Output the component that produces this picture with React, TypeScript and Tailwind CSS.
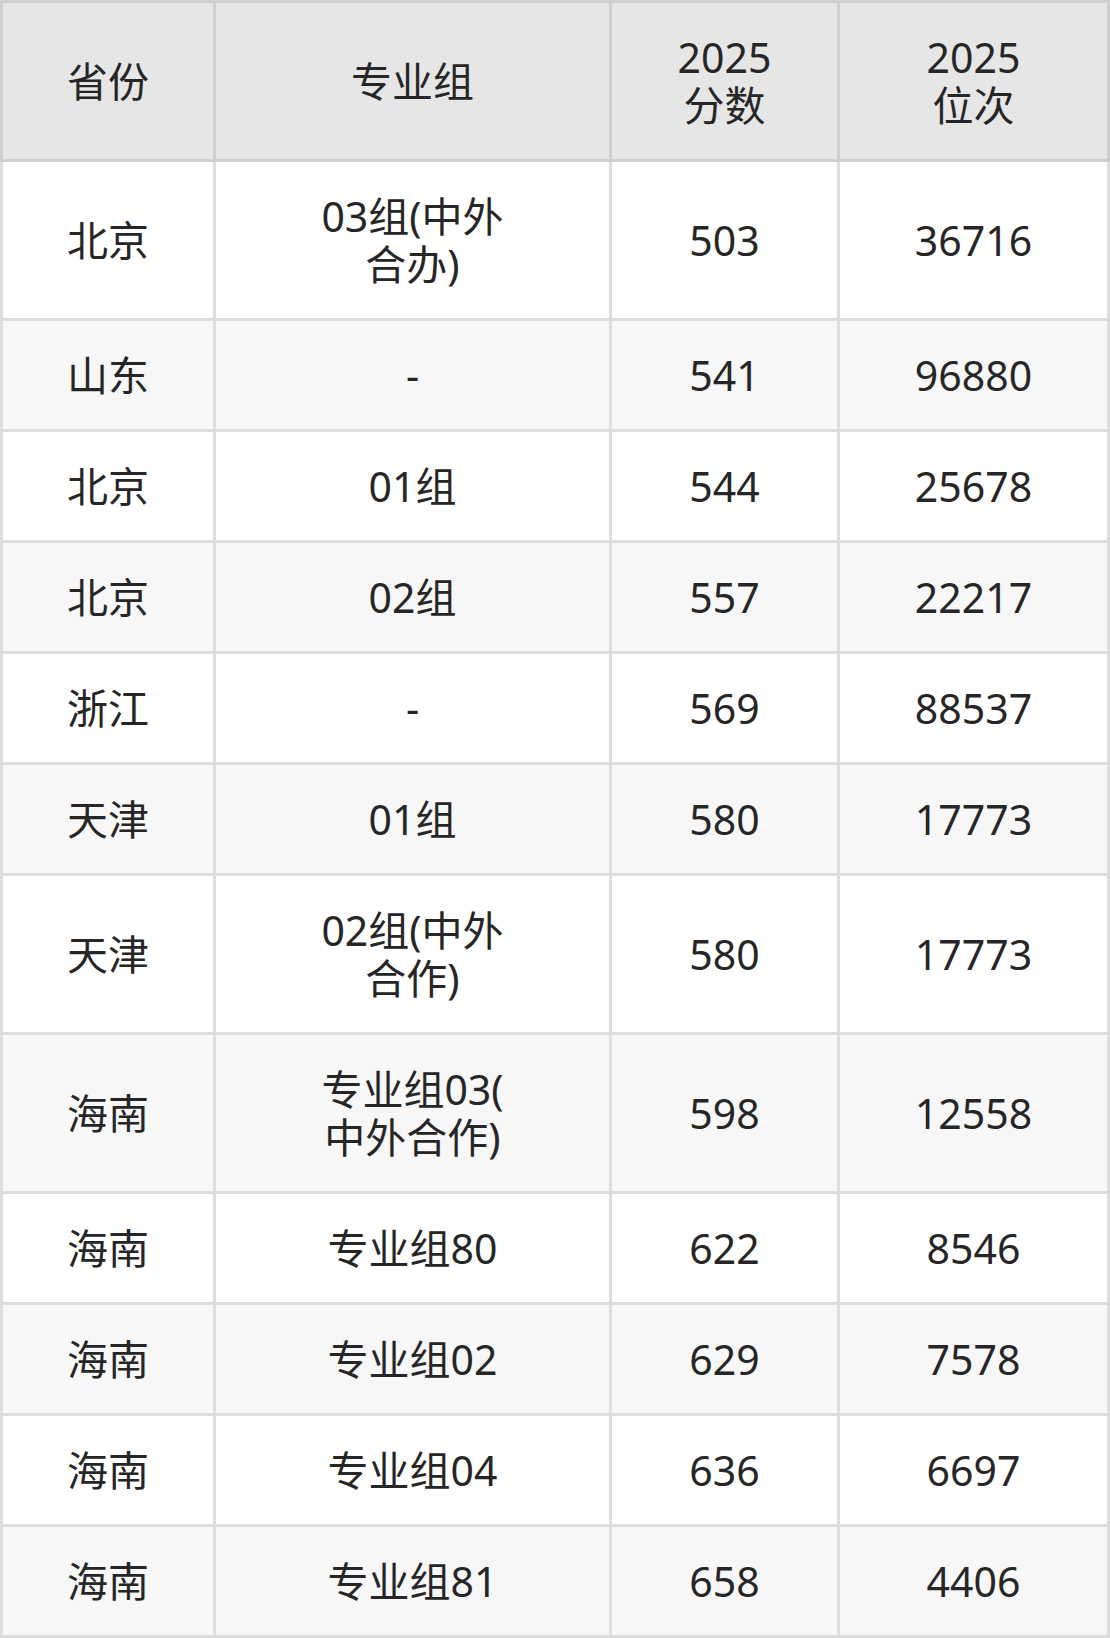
const rows: { province: string; group: string[]; score: string; rank: string }[] = [
  { province: '北京', group: ['03组(中外', '合办)'], score: '503', rank: '36716' },
  { province: '山东', group: ['-'], score: '541', rank: '96880' },
  { province: '北京', group: ['01组'], score: '544', rank: '25678' },
  { province: '北京', group: ['02组'], score: '557', rank: '22217' },
  { province: '浙江', group: ['-'], score: '569', rank: '88537' },
  { province: '天津', group: ['01组'], score: '580', rank: '17773' },
  { province: '天津', group: ['02组(中外', '合作)'], score: '580', rank: '17773' },
  { province: '海南', group: ['专业组03(', '中外合作)'], score: '598', rank: '12558' },
  { province: '海南', group: ['专业组80'], score: '622', rank: '8546' },
  { province: '海南', group: ['专业组02'], score: '629', rank: '7578' },
  { province: '海南', group: ['专业组04'], score: '636', rank: '6697' },
  { province: '海南', group: ['专业组81'], score: '658', rank: '4406' },
]

const cols = 'grid grid-cols-[210px_393px_225px_267px] gap-[3px]'
const cell = 'flex flex-col items-center justify-center text-center py-[30px]'

export default function App() {
  return (
    <div className="w-[1110px] bg-white text-[41px] leading-[48px] text-[#262626]"
      style={{ fontFamily: '"Noto Sans", "Noto Sans CJK SC", sans-serif' }}>
      {/* 表头 */}
      <div className={`${cols} bg-[#cfcfcf] p-[3px]`}>
        <div className={`${cell} bg-[#e6e6e6]`}>省份</div>
        <div className={`${cell} bg-[#e6e6e6]`}>专业组</div>
        <div className={`${cell} bg-[#e6e6e6]`}><span>2025</span><span>分数</span></div>
        <div className={`${cell} bg-[#e6e6e6]`}><span>2025</span><span>位次</span></div>
      </div>

      {/* 数据 */}
      <div className={`${cols} bg-[#dddddd] px-[3px] pb-[3px]`}>
        {rows.map((r, i) => {
          const bg = i % 2 === 0 ? 'bg-white' : 'bg-[#f7f7f7]'
          return [
            <div key={`p${i}`} className={`${cell} ${bg}`}>{r.province}</div>,
            <div key={`g${i}`} className={`${cell} ${bg}`}>
              {r.group.map((line, j) => <span key={j}>{line}</span>)}
            </div>,
            <div key={`s${i}`} className={`${cell} ${bg}`}>{r.score}</div>,
            <div key={`r${i}`} className={`${cell} ${bg}`}>{r.rank}</div>,
          ]
        })}
      </div>
    </div>
  )
}
